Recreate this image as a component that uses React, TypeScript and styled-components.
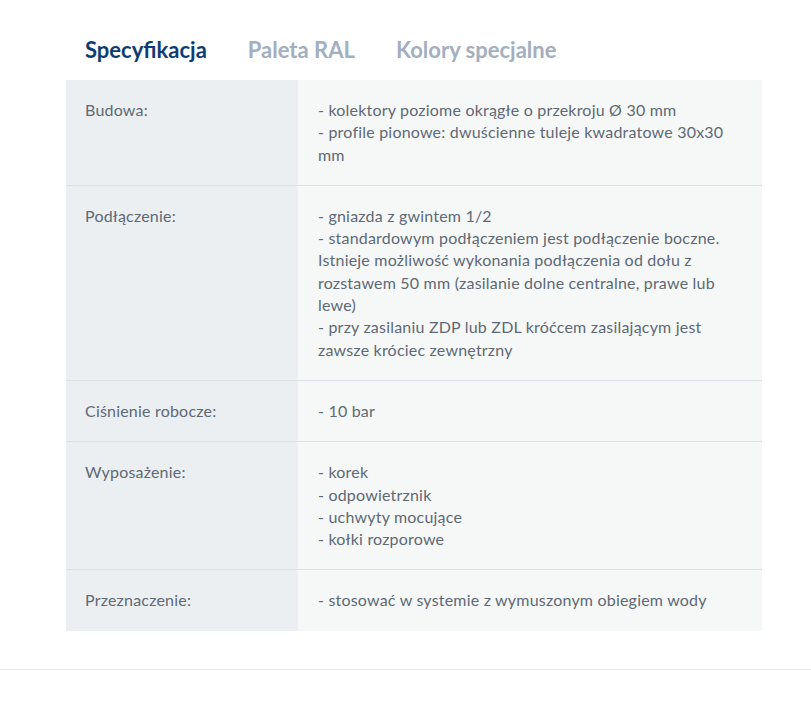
import React from "react";
import styled, { createGlobalStyle } from "styled-components";

const Global = createGlobalStyle`
  html, body { margin: 0; padding: 0; background: #ffffff; }
  body { font-family: Lato, "Noto Sans", sans-serif; }
`;

const Page = styled.div`
  width: 811px;
  padding-top: 33px;
`;

const Section = styled.section`
  width: 696px;
  margin-left: 66px;
`;

const Tabs = styled.nav`
  display: flex;
  gap: 41px;
  padding-left: 19px;
  height: 47px;
  align-items: flex-start;
`;

const Tab = styled.button<{ $active?: boolean }>`
  border: 0;
  background: none;
  padding: 0;
  font-family: inherit;
  font-size: 22px;
  font-weight: 700;
  line-height: 34px;
  color: ${(p) => (p.$active ? "#0f3d73" : "#a3afc0")};
  cursor: pointer;
`;

const Table = styled.div`
  display: flex;
  flex-direction: column;
`;

const Row = styled.div`
  display: grid;
  grid-template-columns: 232px 1fr;
  border-bottom: 1px solid #dde1e5;
  &:last-child { border-bottom: 0; }
`;

const Cell = styled.div<{ $label?: boolean }>`
  background: ${(p) => (p.$label ? "#eceff2" : "#f6f8f8")};
  padding: 19px 20px 19px ${(p) => (p.$label ? "19px" : "20px")};
  font-size: 16px;
  line-height: 22.3px;
  letter-spacing: 0.2px;
  color: #5e6975;
`;

const Footer = styled.div`
  margin-top: 38px;
  border-top: 1px solid #e6e8ec;
  height: 43px;
`;

const rows: [string, string[]][] = [
  ["Budowa:", ["- kolektory poziome okrągłe o przekroju Ø 30 mm", "- profile pionowe: dwuścienne tuleje kwadratowe 30x30 mm"]],
  [
    "Podłączenie:",
    [
      "- gniazda z gwintem 1/2",
      "- standardowym podłączeniem jest podłączenie boczne. Istnieje możliwość wykonania podłączenia od dołu z rozstawem 50 mm (zasilanie dolne centralne, prawe lub lewe)",
      "- przy zasilaniu ZDP lub ZDL króćcem zasilającym jest zawsze króciec zewnętrzny",
    ],
  ],
  ["Ciśnienie robocze:", ["- 10 bar"]],
  ["Wyposażenie:", ["- korek", "- odpowietrznik", "- uchwyty mocujące", "- kołki rozporowe"]],
  ["Przeznaczenie:", ["- stosować w systemie z wymuszonym obiegiem wody"]],
];

export default function App() {
  return (
    <Page>
      <Global />
      <Section>
        <Tabs>
          <Tab $active>Specyfikacja</Tab>
          <Tab>Paleta RAL</Tab>
          <Tab>Kolory specjalne</Tab>
        </Tabs>
        <Table>
          {rows.map(([label, lines]) => (
            <Row key={label}>
              <Cell $label>{label}</Cell>
              <Cell>
                {lines.map((l, i) => (
                  <div key={i}>{l}</div>
                ))}
              </Cell>
            </Row>
          ))}
        </Table>
      </Section>
      <Footer />
    </Page>
  );
}
